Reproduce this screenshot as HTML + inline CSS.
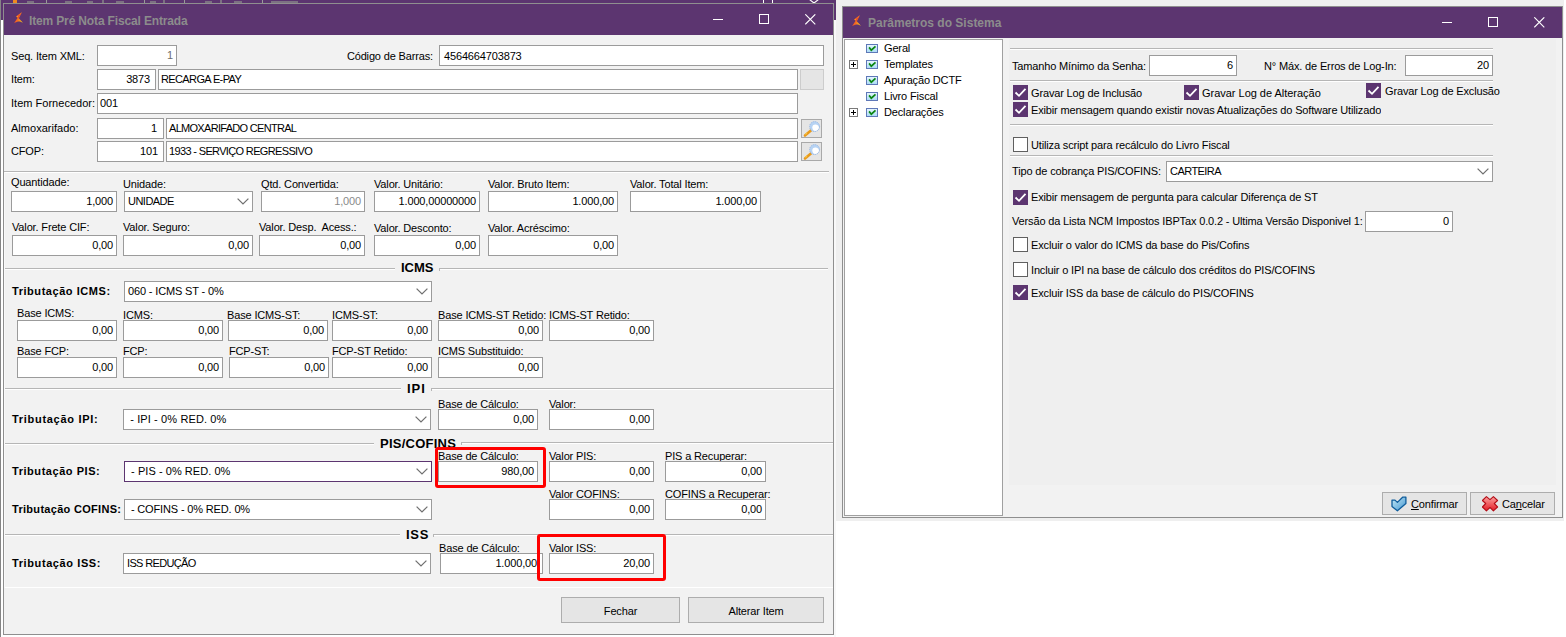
<!DOCTYPE html>
<html><head><meta charset="utf-8"><style>
html,body{margin:0;padding:0;}
body{width:1566px;height:637px;position:relative;overflow:hidden;background:#fff;font-family:'Liberation Sans', sans-serif;font-size:11px;color:#000;}
.a{position:absolute;box-sizing:border-box;}
.t{line-height:11px;white-space:pre;letter-spacing:-0.15px;}
</style></head><body>
<div class="a" style="left:0px;top:0px;width:1566px;height:637px;background:#ffffff;"></div>
<div class="a" style="left:0px;top:0px;width:1px;height:637px;background:#858585;"></div>
<div class="a" style="left:1px;top:0px;width:835px;height:20px;background:#5c3570;"></div>
<div class="a" style="left:27px;top:1px;width:7px;height:2px;background:#8c8c8c;opacity:0.7;"></div>
<div class="a" style="left:65px;top:1px;width:7px;height:2px;background:#8c8c8c;opacity:0.7;"></div>
<div class="a" style="left:87px;top:1px;width:6px;height:2px;background:#8c8c8c;opacity:0.7;"></div>
<div class="a" style="left:116px;top:1px;width:8px;height:2px;background:#8c8c8c;opacity:0.7;"></div>
<div class="a" style="left:150px;top:1px;width:6px;height:2px;background:#8c8c8c;opacity:0.7;"></div>
<div class="a" style="left:205px;top:1px;width:7px;height:2px;background:#8c8c8c;opacity:0.7;"></div>
<div class="a" style="left:234px;top:1px;width:8px;height:2px;background:#8c8c8c;opacity:0.7;"></div>
<div class="a" style="left:271px;top:1px;width:8px;height:2px;background:#8c8c8c;opacity:0.7;"></div>
<div class="a" style="left:279px;top:1px;width:7px;height:2px;background:#8c8c8c;opacity:0.7;"></div>
<div class="a" style="left:286px;top:1px;width:7px;height:2px;background:#8c8c8c;opacity:0.7;"></div>
<div class="a" style="left:293px;top:1px;width:5px;height:2px;background:#8c8c8c;opacity:0.7;"></div>
<div class="a" style="left:46px;top:0px;width:1px;height:3px;background:#9a9a9a;"></div>
<div class="a" style="left:144px;top:0px;width:1px;height:3px;background:#9a9a9a;"></div>
<div class="a" style="left:184px;top:0px;width:1px;height:3px;background:#9a9a9a;"></div>
<div class="a" style="left:262px;top:0px;width:1px;height:3px;background:#9a9a9a;"></div>
<div class="a" style="left:102px;top:0px;width:2px;height:3px;background:#8c8c8c;opacity:0.7;"></div>
<div class="a" style="left:163px;top:0px;width:2px;height:3px;background:#8c8c8c;opacity:0.7;"></div>
<div class="a" style="left:220px;top:0px;width:2px;height:3px;background:#8c8c8c;opacity:0.7;"></div>
<div class="a" style="left:13px;top:0px;width:4px;height:3px;background:#f08a20;"></div>
<div class="a" style="left:763px;top:0px;width:1px;height:3px;background:#fff;"></div>
<div class="a" style="left:772px;top:0px;width:1px;height:3px;background:#fff;"></div>
<svg class="a" style="left:809px;top:0px" width="11" height="4"><path d="M0.5 -0.5 L5 3 L9.5 -0.5" fill="none" stroke="#fff" stroke-width="1.1"/></svg>
<div class="a" style="left:836px;top:0px;width:728px;height:521px;background:#efefef;"></div>
<div class="a" style="left:834px;top:20px;width:2px;height:617px;background:#f8f8f8;"></div>
<div class="a" style="left:3px;top:3px;width:831px;height:632px;background:#f2f2f2;border:1px solid #8f8f8f;"></div>
<div class="a" style="left:4px;top:4px;width:829px;height:31px;background:#5c3570;"></div>
<svg class="a" style="left:14px;top:12px" width="11" height="12"><defs><linearGradient id="ag14" x1="0" y1="0" x2="1" y2="0.3"><stop offset="0" stop-color="#e8352c"/><stop offset="0.55" stop-color="#f26a22"/><stop offset="1" stop-color="#f7b51d"/></linearGradient></defs><path d="M7.8 0.2 L2.2 4.2 L2.4 4.9 L3.8 5.4 L0.1 10.9 L4 9.6 L6 9.4 L8.9 10.7 L4.8 6.2 Z" fill="url(#ag14)"/><path d="M7.8 0.2 L3.4 5.0 L4.6 6.4 Z" fill="#ec4a2a"/><path d="M2.2 4.1 L4.2 4.5 L3.8 5.5 Z" fill="#f5c020"/></svg>
<div class="a t" style="left:29px;top:15px;font-weight:bold;letter-spacing:0.3px;color:#8c8c8c;font-size:12px;line-height:12px;letter-spacing:-0.15px;">Item Pré Nota Fiscal Entrada</div>
<div class="a" style="left:713px;top:19px;width:10px;height:1px;background:#fff;"></div>
<div class="a" style="left:759px;top:14px;width:10px;height:10px;border:1px solid #fff;"></div>
<svg class="a" style="left:805px;top:14px" width="11" height="11"><path d="M0.3 0.3 L10.3 10.3 M10.3 0.3 L0.3 10.3" stroke="#fff" stroke-width="1.1"/></svg>
<div class="a t" style="left:11px;top:51px;">Seq. Item XML:</div>
<div class="a" style="left:97px;top:45px;width:80px;height:21px;background:#fff;border:1px solid #9b9b9b;"></div>
<div class="a t" style="right:1393px;top:50px;text-align:right;color:#6d6d6d;">1</div>
<div class="a t" style="right:1133px;top:51px;text-align:right;">Código de Barras:</div>
<div class="a" style="left:439px;top:45px;width:385px;height:21px;background:#fff;border:1px solid #9b9b9b;"></div>
<div class="a t" style="left:444px;top:51px;">4564664703873</div>
<div class="a t" style="left:11px;top:74px;">Item:</div>
<div class="a" style="left:97px;top:69px;width:59px;height:21px;background:#fff;border:1px solid #9b9b9b;"></div>
<div class="a t" style="right:1416px;top:74px;text-align:right;">3873</div>
<div class="a" style="left:158px;top:69px;width:640px;height:21px;background:#fff;border:1px solid #9b9b9b;"></div>
<div class="a t" style="left:161px;top:74px;letter-spacing:-0.62px;">RECARGA E-PAY</div>
<div class="a" style="left:800px;top:69px;width:24px;height:21px;background:#e5e5e5;border:1px solid #cccccc;"></div>
<div class="a t" style="left:11px;top:98px;letter-spacing:0.02px;">Item Fornecedor:</div>
<div class="a" style="left:97px;top:93px;width:701px;height:21px;background:#fff;border:1px solid #9b9b9b;"></div>
<div class="a t" style="left:100px;top:98px;">001</div>
<div class="a t" style="left:11px;top:123px;letter-spacing:0.02px;">Almoxarifado:</div>
<div class="a" style="left:97px;top:118px;width:67px;height:21px;background:#fff;border:1px solid #9b9b9b;"></div>
<div class="a t" style="right:1409px;top:123px;text-align:right;">1</div>
<div class="a" style="left:166px;top:118px;width:632px;height:21px;background:#fff;border:1px solid #9b9b9b;"></div>
<div class="a t" style="left:169px;top:123px;letter-spacing:-0.7px;">ALMOXARIFADO CENTRAL</div>
<div class="a" style="left:801px;top:119px;width:21px;height:19px;background:#e5e5e5;border:1px solid #a9a9a9;"></div>
<svg class="a" style="left:801px;top:119px" width="21" height="19"><line x1="10.2" y1="11.2" x2="4" y2="16.5" stroke="#e89a1c" stroke-width="2.6" stroke-linecap="round"/><line x1="6" y1="13.5" x2="4.5" y2="15.5" stroke="#f7c948" stroke-width="1.2"/><circle cx="13.6" cy="7.6" r="5" fill="#b7d3f3" stroke="#8fb0e0" stroke-width="0.8" stroke-dasharray="1.2 0.9"/><path d="M11.2 10.6 A4 4 0 0 0 17.6 6.2 A5 4.2 0 0 1 11.2 10.6 Z" fill="#fff"/><circle cx="14.4" cy="8.6" r="3.1" fill="#fff"/></svg>
<div class="a t" style="left:11px;top:146px;">CFOP:</div>
<div class="a" style="left:97px;top:141px;width:67px;height:21px;background:#fff;border:1px solid #9b9b9b;"></div>
<div class="a t" style="right:1408px;top:146px;text-align:right;">101</div>
<div class="a" style="left:166px;top:141px;width:632px;height:21px;background:#fff;border:1px solid #9b9b9b;"></div>
<div class="a t" style="left:169px;top:146px;letter-spacing:-0.65px;">1933 - SERVIÇO REGRESSIVO</div>
<div class="a" style="left:801px;top:142px;width:21px;height:19px;background:#e5e5e5;border:1px solid #a9a9a9;"></div>
<svg class="a" style="left:801px;top:142px" width="21" height="19"><line x1="10.2" y1="11.2" x2="4" y2="16.5" stroke="#e89a1c" stroke-width="2.6" stroke-linecap="round"/><line x1="6" y1="13.5" x2="4.5" y2="15.5" stroke="#f7c948" stroke-width="1.2"/><circle cx="13.6" cy="7.6" r="5" fill="#b7d3f3" stroke="#8fb0e0" stroke-width="0.8" stroke-dasharray="1.2 0.9"/><path d="M11.2 10.6 A4 4 0 0 0 17.6 6.2 A5 4.2 0 0 1 11.2 10.6 Z" fill="#fff"/><circle cx="14.4" cy="8.6" r="3.1" fill="#fff"/></svg>
<div class="a" style="left:4px;top:171px;width:825px;height:1px;background:#b6b6b6;"></div>
<div class="a" style="left:4px;top:172px;width:825px;height:1px;background:#fff;"></div>
<div class="a t" style="left:11px;top:177px;">Quantidade:</div>
<div class="a t" style="left:123px;top:179px;">Unidade:</div>
<div class="a t" style="left:261px;top:179px;">Qtd. Convertida:</div>
<div class="a t" style="left:374px;top:179px;">Valor. Unitário:</div>
<div class="a t" style="left:488px;top:179px;">Valor. Bruto Item:</div>
<div class="a t" style="left:630px;top:179px;">Valor. Total Item:</div>
<div class="a" style="left:11px;top:191px;width:106px;height:21px;background:#fff;border:1px solid #9b9b9b;"></div>
<div class="a t" style="right:1453px;top:196px;text-align:right;">1,000</div>
<div class="a" style="left:124px;top:191px;width:129px;height:21px;background:#fff;border:1px solid #9b9b9b;"></div>
<div class="a t" style="left:128px;top:196px;letter-spacing:-0.52px;">UNIDADE</div>
<svg class="a" style="left:237px;top:198px" width="13" height="8"><path d="M0.6 0.6 L6 5.9 L11.4 0.6" fill="none" stroke="#707070" stroke-width="1.25"/></svg>
<div class="a" style="left:261px;top:191px;width:104px;height:21px;background:#fff;border:1px solid #9b9b9b;"></div>
<div class="a t" style="right:1205px;top:196px;text-align:right;color:#8a8a8a;">1,000</div>
<div class="a" style="left:374px;top:191px;width:106px;height:21px;background:#fff;border:1px solid #9b9b9b;"></div>
<div class="a t" style="right:1090px;top:196px;text-align:right;">1.000,00000000</div>
<div class="a" style="left:488px;top:191px;width:130px;height:21px;background:#fff;border:1px solid #9b9b9b;"></div>
<div class="a t" style="right:952px;top:196px;text-align:right;">1.000,00</div>
<div class="a" style="left:630px;top:191px;width:131px;height:21px;background:#fff;border:1px solid #9b9b9b;"></div>
<div class="a t" style="right:809px;top:196px;text-align:right;">1.000,00</div>
<div class="a t" style="left:12px;top:222px;">Valor. Frete CIF:</div>
<div class="a t" style="left:123px;top:222px;">Valor. Seguro:</div>
<div class="a t" style="left:259px;top:222px;">Valor. Desp.  Acess.:</div>
<div class="a t" style="left:374px;top:223px;">Valor. Desconto:</div>
<div class="a t" style="left:488px;top:223px;">Valor. Acréscimo:</div>
<div class="a" style="left:12px;top:235px;width:105px;height:21px;background:#fff;border:1px solid #9b9b9b;"></div>
<div class="a t" style="right:1453px;top:240px;text-align:right;">0,00</div>
<div class="a" style="left:123px;top:235px;width:130px;height:21px;background:#fff;border:1px solid #9b9b9b;"></div>
<div class="a t" style="right:1317px;top:240px;text-align:right;">0,00</div>
<div class="a" style="left:259px;top:235px;width:106px;height:21px;background:#fff;border:1px solid #9b9b9b;"></div>
<div class="a t" style="right:1205px;top:240px;text-align:right;">0,00</div>
<div class="a" style="left:374px;top:235px;width:106px;height:21px;background:#fff;border:1px solid #9b9b9b;"></div>
<div class="a t" style="right:1090px;top:240px;text-align:right;">0,00</div>
<div class="a" style="left:488px;top:235px;width:130px;height:21px;background:#fff;border:1px solid #9b9b9b;"></div>
<div class="a t" style="right:952px;top:240px;text-align:right;">0,00</div>
<div class="a" style="left:4px;top:268px;width:391px;height:1px;background:#b6b6b6;"></div>
<div class="a" style="left:4px;top:269px;width:391px;height:1px;background:#fff;"></div>
<div class="a" style="left:439px;top:268px;width:389px;height:1px;background:#b6b6b6;"></div>
<div class="a" style="left:439px;top:269px;width:389px;height:1px;background:#fff;"></div>
<div class="a" style="left:439px;top:268px;width:1px;height:3px;background:#b6b6b6;"></div>
<div class="a t" style="left:401px;top:261px;font-weight:bold;letter-spacing:0.3px;font-size:13px;line-height:13px;letter-spacing:0px;">ICMS</div>
<div class="a t" style="left:12px;top:286px;font-weight:bold;letter-spacing:0.3px;letter-spacing:0.55px;">Tributação ICMS:</div>
<div class="a" style="left:124px;top:281px;width:308px;height:21px;background:#fff;border:1px solid #9b9b9b;"></div>
<div class="a t" style="left:128px;top:286px;">060 - ICMS ST - 0%</div>
<svg class="a" style="left:416px;top:288px" width="13" height="8"><path d="M0.6 0.6 L6 5.9 L11.4 0.6" fill="none" stroke="#707070" stroke-width="1.25"/></svg>
<div class="a t" style="left:17px;top:308px;">Base ICMS:</div>
<div class="a t" style="left:123px;top:310px;">ICMS:</div>
<div class="a t" style="left:227px;top:310px;">Base ICMS-ST:</div>
<div class="a t" style="left:332px;top:310px;">ICMS-ST:</div>
<div class="a t" style="left:438px;top:310px;">Base ICMS-ST Retido:</div>
<div class="a t" style="left:549px;top:310px;">ICMS-ST Retido:</div>
<div class="a" style="left:17px;top:320px;width:100px;height:21px;background:#fff;border:1px solid #9b9b9b;"></div>
<div class="a t" style="right:1453px;top:325px;text-align:right;">0,00</div>
<div class="a" style="left:123px;top:320px;width:100px;height:21px;background:#fff;border:1px solid #9b9b9b;"></div>
<div class="a t" style="right:1347px;top:325px;text-align:right;">0,00</div>
<div class="a" style="left:228px;top:320px;width:100px;height:21px;background:#fff;border:1px solid #9b9b9b;"></div>
<div class="a t" style="right:1242px;top:325px;text-align:right;">0,00</div>
<div class="a" style="left:332px;top:320px;width:100px;height:21px;background:#fff;border:1px solid #9b9b9b;"></div>
<div class="a t" style="right:1138px;top:325px;text-align:right;">0,00</div>
<div class="a" style="left:438px;top:320px;width:105px;height:21px;background:#fff;border:1px solid #9b9b9b;"></div>
<div class="a t" style="right:1027px;top:325px;text-align:right;">0,00</div>
<div class="a" style="left:549px;top:320px;width:105px;height:21px;background:#fff;border:1px solid #9b9b9b;"></div>
<div class="a t" style="right:916px;top:325px;text-align:right;">0,00</div>
<div class="a t" style="left:17px;top:346px;">Base FCP:</div>
<div class="a t" style="left:123px;top:346px;">FCP:</div>
<div class="a t" style="left:229px;top:346px;">FCP-ST:</div>
<div class="a t" style="left:332px;top:346px;">FCP-ST Retido:</div>
<div class="a t" style="left:438px;top:346px;">ICMS Substituido:</div>
<div class="a" style="left:17px;top:357px;width:100px;height:21px;background:#fff;border:1px solid #9b9b9b;"></div>
<div class="a t" style="right:1453px;top:362px;text-align:right;">0,00</div>
<div class="a" style="left:123px;top:357px;width:100px;height:21px;background:#fff;border:1px solid #9b9b9b;"></div>
<div class="a t" style="right:1347px;top:362px;text-align:right;">0,00</div>
<div class="a" style="left:229px;top:357px;width:100px;height:21px;background:#fff;border:1px solid #9b9b9b;"></div>
<div class="a t" style="right:1241px;top:362px;text-align:right;">0,00</div>
<div class="a" style="left:332px;top:357px;width:100px;height:21px;background:#fff;border:1px solid #9b9b9b;"></div>
<div class="a t" style="right:1138px;top:362px;text-align:right;">0,00</div>
<div class="a" style="left:438px;top:357px;width:105px;height:21px;background:#fff;border:1px solid #9b9b9b;"></div>
<div class="a t" style="right:1027px;top:362px;text-align:right;">0,00</div>
<div class="a" style="left:4px;top:388px;width:397px;height:1px;background:#b6b6b6;"></div>
<div class="a" style="left:4px;top:389px;width:397px;height:1px;background:#fff;"></div>
<div class="a" style="left:431px;top:388px;width:402px;height:1px;background:#b6b6b6;"></div>
<div class="a" style="left:431px;top:389px;width:402px;height:1px;background:#fff;"></div>
<div class="a" style="left:431px;top:388px;width:1px;height:3px;background:#b6b6b6;"></div>
<div class="a t" style="left:407px;top:382px;font-weight:bold;letter-spacing:0.3px;font-size:13px;line-height:13px;letter-spacing:1.0px;">IPI</div>
<div class="a t" style="left:12px;top:414px;font-weight:bold;letter-spacing:0.3px;letter-spacing:0.7px;">Tributação IPI:</div>
<div class="a" style="left:123px;top:409px;width:308px;height:21px;background:#fff;border:1px solid #9b9b9b;"></div>
<div class="a t" style="left:127px;top:414px;letter-spacing:0.12px;"> - IPI - 0% RED. 0%</div>
<svg class="a" style="left:415px;top:416px" width="13" height="8"><path d="M0.6 0.6 L6 5.9 L11.4 0.6" fill="none" stroke="#707070" stroke-width="1.25"/></svg>
<div class="a t" style="left:438px;top:399px;">Base de Cálculo:</div>
<div class="a t" style="left:549px;top:399px;">Valor:</div>
<div class="a" style="left:438px;top:409px;width:100px;height:21px;background:#fff;border:1px solid #9b9b9b;"></div>
<div class="a t" style="right:1032px;top:414px;text-align:right;">0,00</div>
<div class="a" style="left:549px;top:409px;width:105px;height:21px;background:#fff;border:1px solid #9b9b9b;"></div>
<div class="a t" style="right:916px;top:414px;text-align:right;">0,00</div>
<div class="a" style="left:4px;top:443px;width:370px;height:1px;background:#b6b6b6;"></div>
<div class="a" style="left:4px;top:444px;width:370px;height:1px;background:#fff;"></div>
<div class="a" style="left:461px;top:442px;width:372px;height:1px;background:#b6b6b6;"></div>
<div class="a" style="left:461px;top:443px;width:372px;height:1px;background:#fff;"></div>
<div class="a" style="left:461px;top:442px;width:1px;height:3px;background:#b6b6b6;"></div>
<div class="a t" style="left:380px;top:437px;font-weight:bold;letter-spacing:0.3px;font-size:13px;line-height:13px;letter-spacing:0.25px;">PIS/COFINS</div>
<div class="a t" style="left:12px;top:466px;font-weight:bold;letter-spacing:0.3px;letter-spacing:0.55px;">Tributação PIS:</div>
<div class="a" style="left:124px;top:461px;width:308px;height:21px;background:#fff;border:1px solid #5c3570;"></div>
<div class="a t" style="left:128px;top:466px;letter-spacing:0.05px;"> - PIS - 0% RED. 0%</div>
<svg class="a" style="left:416px;top:468px" width="13" height="8"><path d="M0.6 0.6 L6 5.9 L11.4 0.6" fill="none" stroke="#707070" stroke-width="1.25"/></svg>
<div class="a t" style="left:438px;top:451px;">Base de Cálculo:</div>
<div class="a t" style="left:549px;top:451px;">Valor PIS:</div>
<div class="a t" style="left:665px;top:451px;">PIS a Recuperar:</div>
<div class="a" style="left:438px;top:461px;width:100px;height:21px;background:#fff;border:1px solid #9b9b9b;"></div>
<div class="a t" style="right:1032px;top:466px;text-align:right;">980,00</div>
<div class="a" style="left:549px;top:461px;width:105px;height:21px;background:#fff;border:1px solid #9b9b9b;"></div>
<div class="a t" style="right:916px;top:466px;text-align:right;">0,00</div>
<div class="a" style="left:665px;top:461px;width:101px;height:21px;background:#fff;border:1px solid #9b9b9b;"></div>
<div class="a t" style="right:804px;top:466px;text-align:right;">0,00</div>
<div class="a t" style="left:12px;top:504px;font-weight:bold;letter-spacing:0.3px;">Tributação COFINS:</div>
<div class="a" style="left:124px;top:499px;width:308px;height:21px;background:#fff;border:1px solid #9b9b9b;"></div>
<div class="a t" style="left:128px;top:504px;"> - COFINS - 0% RED. 0%</div>
<svg class="a" style="left:416px;top:506px" width="13" height="8"><path d="M0.6 0.6 L6 5.9 L11.4 0.6" fill="none" stroke="#707070" stroke-width="1.25"/></svg>
<div class="a t" style="left:549px;top:489px;">Valor COFINS:</div>
<div class="a t" style="left:665px;top:489px;">COFINS a Recuperar:</div>
<div class="a" style="left:549px;top:499px;width:105px;height:21px;background:#fff;border:1px solid #9b9b9b;"></div>
<div class="a t" style="right:916px;top:504px;text-align:right;">0,00</div>
<div class="a" style="left:665px;top:499px;width:101px;height:21px;background:#fff;border:1px solid #9b9b9b;"></div>
<div class="a t" style="right:804px;top:504px;text-align:right;">0,00</div>
<div class="a" style="left:4px;top:534px;width:396px;height:1px;background:#b6b6b6;"></div>
<div class="a" style="left:4px;top:535px;width:396px;height:1px;background:#fff;"></div>
<div class="a" style="left:433px;top:534px;width:400px;height:1px;background:#b6b6b6;"></div>
<div class="a" style="left:433px;top:535px;width:400px;height:1px;background:#fff;"></div>
<div class="a" style="left:433px;top:534px;width:1px;height:3px;background:#b6b6b6;"></div>
<div class="a t" style="left:406px;top:528px;font-weight:bold;letter-spacing:0.3px;font-size:13px;line-height:13px;letter-spacing:0.7px;">ISS</div>
<div class="a t" style="left:12px;top:558px;font-weight:bold;letter-spacing:0.3px;letter-spacing:0.6px;">Tributação ISS:</div>
<div class="a" style="left:123px;top:553px;width:308px;height:21px;background:#fff;border:1px solid #9b9b9b;"></div>
<div class="a t" style="left:127px;top:558px;letter-spacing:-0.65px;">ISS REDUÇÃO</div>
<svg class="a" style="left:415px;top:560px" width="13" height="8"><path d="M0.6 0.6 L6 5.9 L11.4 0.6" fill="none" stroke="#707070" stroke-width="1.25"/></svg>
<div class="a t" style="left:439px;top:543px;">Base de Cálculo:</div>
<div class="a t" style="left:549px;top:543px;">Valor ISS:</div>
<div class="a" style="left:440px;top:553px;width:103px;height:21px;background:#fff;border:1px solid #9b9b9b;"></div>
<div class="a t" style="right:1029px;top:558px;text-align:right;">1.000,00</div>
<div class="a" style="left:549px;top:553px;width:105px;height:21px;background:#fff;border:1px solid #9b9b9b;"></div>
<div class="a t" style="right:916px;top:558px;text-align:right;">20,00</div>
<div class="a" style="left:4px;top:587px;width:829px;height:1px;background:#fff;"></div>
<div class="a" style="left:4px;top:172px;width:1px;height:416px;background:#f9f9f9;"></div>
<div class="a" style="left:435px;top:447px;width:111px;height:41px;border:1px solid #ff0000;border-width:3px;border-radius:3px;"></div>
<div class="a" style="left:537px;top:534px;width:129px;height:47px;border:1px solid #ff0000;border-width:3px;border-radius:3px;"></div>
<div class="a" style="left:561px;top:597px;width:119px;height:26px;background:#e5e5e5;border:1px solid #adadad;"></div>
<div class="a t" style="left:561px;top:606px;width:119px;text-align:center">Fechar</div>
<div class="a" style="left:688px;top:597px;width:136px;height:26px;background:#e5e5e5;border:1px solid #adadad;"></div>
<div class="a t" style="left:688px;top:606px;width:136px;text-align:center">Alterar Item</div>
<div class="a" style="left:842px;top:6px;width:721px;height:512px;background:#f2f2f2;border:1px solid #8f8f8f;"></div>
<div class="a" style="left:843px;top:7px;width:719px;height:31px;background:#5c3570;"></div>
<svg class="a" style="left:852px;top:15px" width="11" height="12"><defs><linearGradient id="ag852" x1="0" y1="0" x2="1" y2="0.3"><stop offset="0" stop-color="#e8352c"/><stop offset="0.55" stop-color="#f26a22"/><stop offset="1" stop-color="#f7b51d"/></linearGradient></defs><path d="M7.8 0.2 L2.2 4.2 L2.4 4.9 L3.8 5.4 L0.1 10.9 L4 9.6 L6 9.4 L8.9 10.7 L4.8 6.2 Z" fill="url(#ag852)"/><path d="M7.8 0.2 L3.4 5.0 L4.6 6.4 Z" fill="#ec4a2a"/><path d="M2.2 4.1 L4.2 4.5 L3.8 5.5 Z" fill="#f5c020"/></svg>
<div class="a t" style="left:868px;top:17px;font-weight:bold;letter-spacing:0.3px;color:#8c8c8c;font-size:12px;line-height:12px;letter-spacing:0px;">Parâmetros do Sistema</div>
<div class="a" style="left:1442px;top:22px;width:10px;height:1px;background:#fff;"></div>
<div class="a" style="left:1488px;top:17px;width:10px;height:10px;border:1px solid #fff;"></div>
<svg class="a" style="left:1534px;top:17px" width="11" height="11"><path d="M0.3 0.3 L10.3 10.3 M10.3 0.3 L0.3 10.3" stroke="#fff" stroke-width="1.1"/></svg>
<div class="a" style="left:844px;top:39px;width:159px;height:477px;background:#fff;border:1px solid #a0a0a0;"></div>
<svg class="a" style="left:866px;top:44px" width="12" height="9"><defs><linearGradient id="tcg44" x1="0" y1="0" x2="0" y2="1"><stop offset="0" stop-color="#eaf7ff"/><stop offset="1" stop-color="#a8daf5"/></linearGradient></defs><rect x="0.5" y="0.5" width="11" height="8" fill="url(#tcg44)" stroke="#5f78b8"/><path d="M3.1 3.4 L5.3 6.2 L9.5 2.3" fill="none" stroke="#0a8612" stroke-width="1.7"/></svg>
<div class="a t" style="left:884px;top:43px;">Geral</div>
<div class="a" style="left:849px;top:60px;width:9px;height:9px;background:#fff;border:1px solid #7a7a7a;"></div>
<div class="a" style="left:851px;top:64px;width:5px;height:1px;background:#000;"></div>
<div class="a" style="left:853px;top:62px;width:1px;height:5px;background:#000;"></div>
<svg class="a" style="left:866px;top:60px" width="12" height="9"><defs><linearGradient id="tcg60" x1="0" y1="0" x2="0" y2="1"><stop offset="0" stop-color="#eaf7ff"/><stop offset="1" stop-color="#a8daf5"/></linearGradient></defs><rect x="0.5" y="0.5" width="11" height="8" fill="url(#tcg60)" stroke="#5f78b8"/><path d="M3.1 3.4 L5.3 6.2 L9.5 2.3" fill="none" stroke="#0a8612" stroke-width="1.7"/></svg>
<div class="a t" style="left:884px;top:59px;">Templates</div>
<svg class="a" style="left:866px;top:76px" width="12" height="9"><defs><linearGradient id="tcg76" x1="0" y1="0" x2="0" y2="1"><stop offset="0" stop-color="#eaf7ff"/><stop offset="1" stop-color="#a8daf5"/></linearGradient></defs><rect x="0.5" y="0.5" width="11" height="8" fill="url(#tcg76)" stroke="#5f78b8"/><path d="M3.1 3.4 L5.3 6.2 L9.5 2.3" fill="none" stroke="#0a8612" stroke-width="1.7"/></svg>
<div class="a t" style="left:884px;top:75px;">Apuração DCTF</div>
<svg class="a" style="left:866px;top:92px" width="12" height="9"><defs><linearGradient id="tcg92" x1="0" y1="0" x2="0" y2="1"><stop offset="0" stop-color="#eaf7ff"/><stop offset="1" stop-color="#a8daf5"/></linearGradient></defs><rect x="0.5" y="0.5" width="11" height="8" fill="url(#tcg92)" stroke="#5f78b8"/><path d="M3.1 3.4 L5.3 6.2 L9.5 2.3" fill="none" stroke="#0a8612" stroke-width="1.7"/></svg>
<div class="a t" style="left:884px;top:91px;">Livro Fiscal</div>
<div class="a" style="left:849px;top:108px;width:9px;height:9px;background:#fff;border:1px solid #7a7a7a;"></div>
<div class="a" style="left:851px;top:112px;width:5px;height:1px;background:#000;"></div>
<div class="a" style="left:853px;top:110px;width:1px;height:5px;background:#000;"></div>
<svg class="a" style="left:866px;top:108px" width="12" height="9"><defs><linearGradient id="tcg108" x1="0" y1="0" x2="0" y2="1"><stop offset="0" stop-color="#eaf7ff"/><stop offset="1" stop-color="#a8daf5"/></linearGradient></defs><rect x="0.5" y="0.5" width="11" height="8" fill="url(#tcg108)" stroke="#5f78b8"/><path d="M3.1 3.4 L5.3 6.2 L9.5 2.3" fill="none" stroke="#0a8612" stroke-width="1.7"/></svg>
<div class="a t" style="left:884px;top:107px;">Declarações</div>
<div class="a" style="left:1009px;top:39px;width:547px;height:446px;background:#efefef;"></div>
<div class="a" style="left:1010px;top:48px;width:483px;height:1px;background:#b6b6b6;"></div>
<div class="a" style="left:1010px;top:49px;width:483px;height:1px;background:#fff;"></div>
<div class="a" style="left:1010px;top:80px;width:483px;height:1px;background:#b6b6b6;"></div>
<div class="a" style="left:1010px;top:81px;width:483px;height:1px;background:#fff;"></div>
<div class="a" style="left:1010px;top:124px;width:483px;height:1px;background:#b6b6b6;"></div>
<div class="a" style="left:1010px;top:125px;width:483px;height:1px;background:#fff;"></div>
<div class="a" style="left:1010px;top:155px;width:483px;height:1px;background:#b6b6b6;"></div>
<div class="a" style="left:1010px;top:156px;width:483px;height:1px;background:#fff;"></div>
<div class="a t" style="left:1012px;top:61px;">Tamanho Mínimo da Senha:</div>
<div class="a" style="left:1149px;top:55px;width:88px;height:21px;background:#fff;border:1px solid #9b9b9b;"></div>
<div class="a t" style="right:333px;top:60px;text-align:right;">6</div>
<div class="a t" style="left:1264px;top:61px;">N° Máx. de Erros de Log-In:</div>
<div class="a" style="left:1405px;top:55px;width:88px;height:21px;background:#fff;border:1px solid #9b9b9b;"></div>
<div class="a t" style="right:77px;top:60px;text-align:right;">20</div>
<div class="a" style="left:1013px;top:85px;width:15px;height:15px;background:#5c3570;"></div>
<svg class="a" style="left:1013px;top:85px" width="15" height="15"><path d="M2.5 7.5 L6 10.8 L12.5 3.8" fill="none" stroke="#fff" stroke-width="1.8"/></svg>
<div class="a t" style="left:1031px;top:88px;">Gravar Log de Inclusão</div>
<div class="a" style="left:1184px;top:85px;width:15px;height:15px;background:#5c3570;"></div>
<svg class="a" style="left:1184px;top:85px" width="15" height="15"><path d="M2.5 7.5 L6 10.8 L12.5 3.8" fill="none" stroke="#fff" stroke-width="1.8"/></svg>
<div class="a t" style="left:1202px;top:88px;letter-spacing:-0.02px;">Gravar Log de Alteração</div>
<div class="a" style="left:1366px;top:83px;width:15px;height:15px;background:#5c3570;"></div>
<svg class="a" style="left:1366px;top:83px" width="15" height="15"><path d="M2.5 7.5 L6 10.8 L12.5 3.8" fill="none" stroke="#fff" stroke-width="1.8"/></svg>
<div class="a t" style="left:1385px;top:86px;">Gravar Log de Exclusão</div>
<div class="a" style="left:1013px;top:102px;width:15px;height:15px;background:#5c3570;"></div>
<svg class="a" style="left:1013px;top:102px" width="15" height="15"><path d="M2.5 7.5 L6 10.8 L12.5 3.8" fill="none" stroke="#fff" stroke-width="1.8"/></svg>
<div class="a" style="left:1031px;top:100px;width:350px;height:16px;overflow:hidden"><div class="a t" style="left:0;top:5px">Exibir mensagem quando existir novas Atualizações do Software Utilizado</div></div>
<div class="a" style="left:1013px;top:137px;width:15px;height:15px;background:#fff;border:1px solid #5f5f5f;"></div>
<div class="a t" style="left:1031px;top:140px;">Utiliza script para recálculo do Livro Fiscal</div>
<div class="a t" style="left:1012px;top:166px;">Tipo de cobrança PIS/COFINS:</div>
<div class="a" style="left:1166px;top:161px;width:327px;height:21px;background:#fff;border:1px solid #9b9b9b;"></div>
<div class="a t" style="left:1170px;top:166px;letter-spacing:-0.55px;">CARTEIRA</div>
<svg class="a" style="left:1477px;top:168px" width="13" height="8"><path d="M0.6 0.6 L6 5.9 L11.4 0.6" fill="none" stroke="#707070" stroke-width="1.25"/></svg>
<div class="a" style="left:1013px;top:190px;width:15px;height:15px;background:#5c3570;"></div>
<svg class="a" style="left:1013px;top:190px" width="15" height="15"><path d="M2.5 7.5 L6 10.8 L12.5 3.8" fill="none" stroke="#fff" stroke-width="1.8"/></svg>
<div class="a t" style="left:1031px;top:192px;">Exibir mensagem de pergunta para calcular Diferença de ST</div>
<div class="a t" style="left:1012px;top:216px;">Versão da Lista NCM Impostos IBPTax 0.0.2 - Ultima Versão Disponivel 1:</div>
<div class="a" style="left:1365px;top:211px;width:88px;height:21px;background:#fff;border:1px solid #9b9b9b;"></div>
<div class="a t" style="right:117px;top:216px;text-align:right;">0</div>
<div class="a" style="left:1013px;top:237px;width:15px;height:15px;background:#fff;border:1px solid #5f5f5f;"></div>
<div class="a t" style="left:1031px;top:240px;">Excluir o valor do ICMS da base do Pis/Cofins</div>
<div class="a" style="left:1013px;top:262px;width:15px;height:15px;background:#fff;border:1px solid #5f5f5f;"></div>
<div class="a t" style="left:1031px;top:265px;">Incluir o IPI na base de cálculo dos créditos do PIS/COFINS</div>
<div class="a" style="left:1013px;top:285px;width:15px;height:15px;background:#5c3570;"></div>
<svg class="a" style="left:1013px;top:285px" width="15" height="15"><path d="M2.5 7.5 L6 10.8 L12.5 3.8" fill="none" stroke="#fff" stroke-width="1.8"/></svg>
<div class="a t" style="left:1031px;top:288px;">Excluir ISS da base de cálculo do PIS/COFINS</div>
<div class="a" style="left:1382px;top:492px;width:85px;height:23px;background:#e5e5e5;border:1px solid #adadad;"></div>
<div class="a" style="left:1470px;top:492px;width:85px;height:23px;background:#e5e5e5;border:1px solid #adadad;"></div>
<svg class="a" style="left:1391px;top:496px" width="16" height="16"><defs><linearGradient id="okg" x1="0" y1="0" x2="1" y2="1"><stop offset="0" stop-color="#c8ecf8"/><stop offset="1" stop-color="#3f93cf"/></linearGradient></defs><path d="M1.0 4.1 L4.0 4.1 L6.4 6.4 L11.6 1.2 L14.9 1.2 L14.9 7.4 L6.4 14.8 L1.0 10.5 Z" fill="url(#okg)" stroke="#0f5d9c" stroke-width="1.3" stroke-linejoin="round"/></svg>
<div class="a t" style="left:1411px;top:499px;"><u>C</u>onfirmar</div>
<svg class="a" style="left:1482px;top:496px" width="17" height="16"><defs><linearGradient id="xg" x1="0" y1="0" x2="0" y2="1"><stop offset="0" stop-color="#fca3a0"/><stop offset="1" stop-color="#e41b25"/></linearGradient></defs><path d="M4.4 0.6 L8 3.6 L11.4 0.6 L15.6 4.5 L12.3 7.5 L15.6 11 L11.4 14.8 L8 11.5 L4.4 14.8 L0.4 11 L3.7 7.5 L0.4 4.5 Z" fill="url(#xg)" stroke="#b30d17" stroke-width="1.1" stroke-linejoin="round"/></svg>
<div class="a t" style="left:1502px;top:499px;">Ca<u>n</u>celar</div>
</body></html>
